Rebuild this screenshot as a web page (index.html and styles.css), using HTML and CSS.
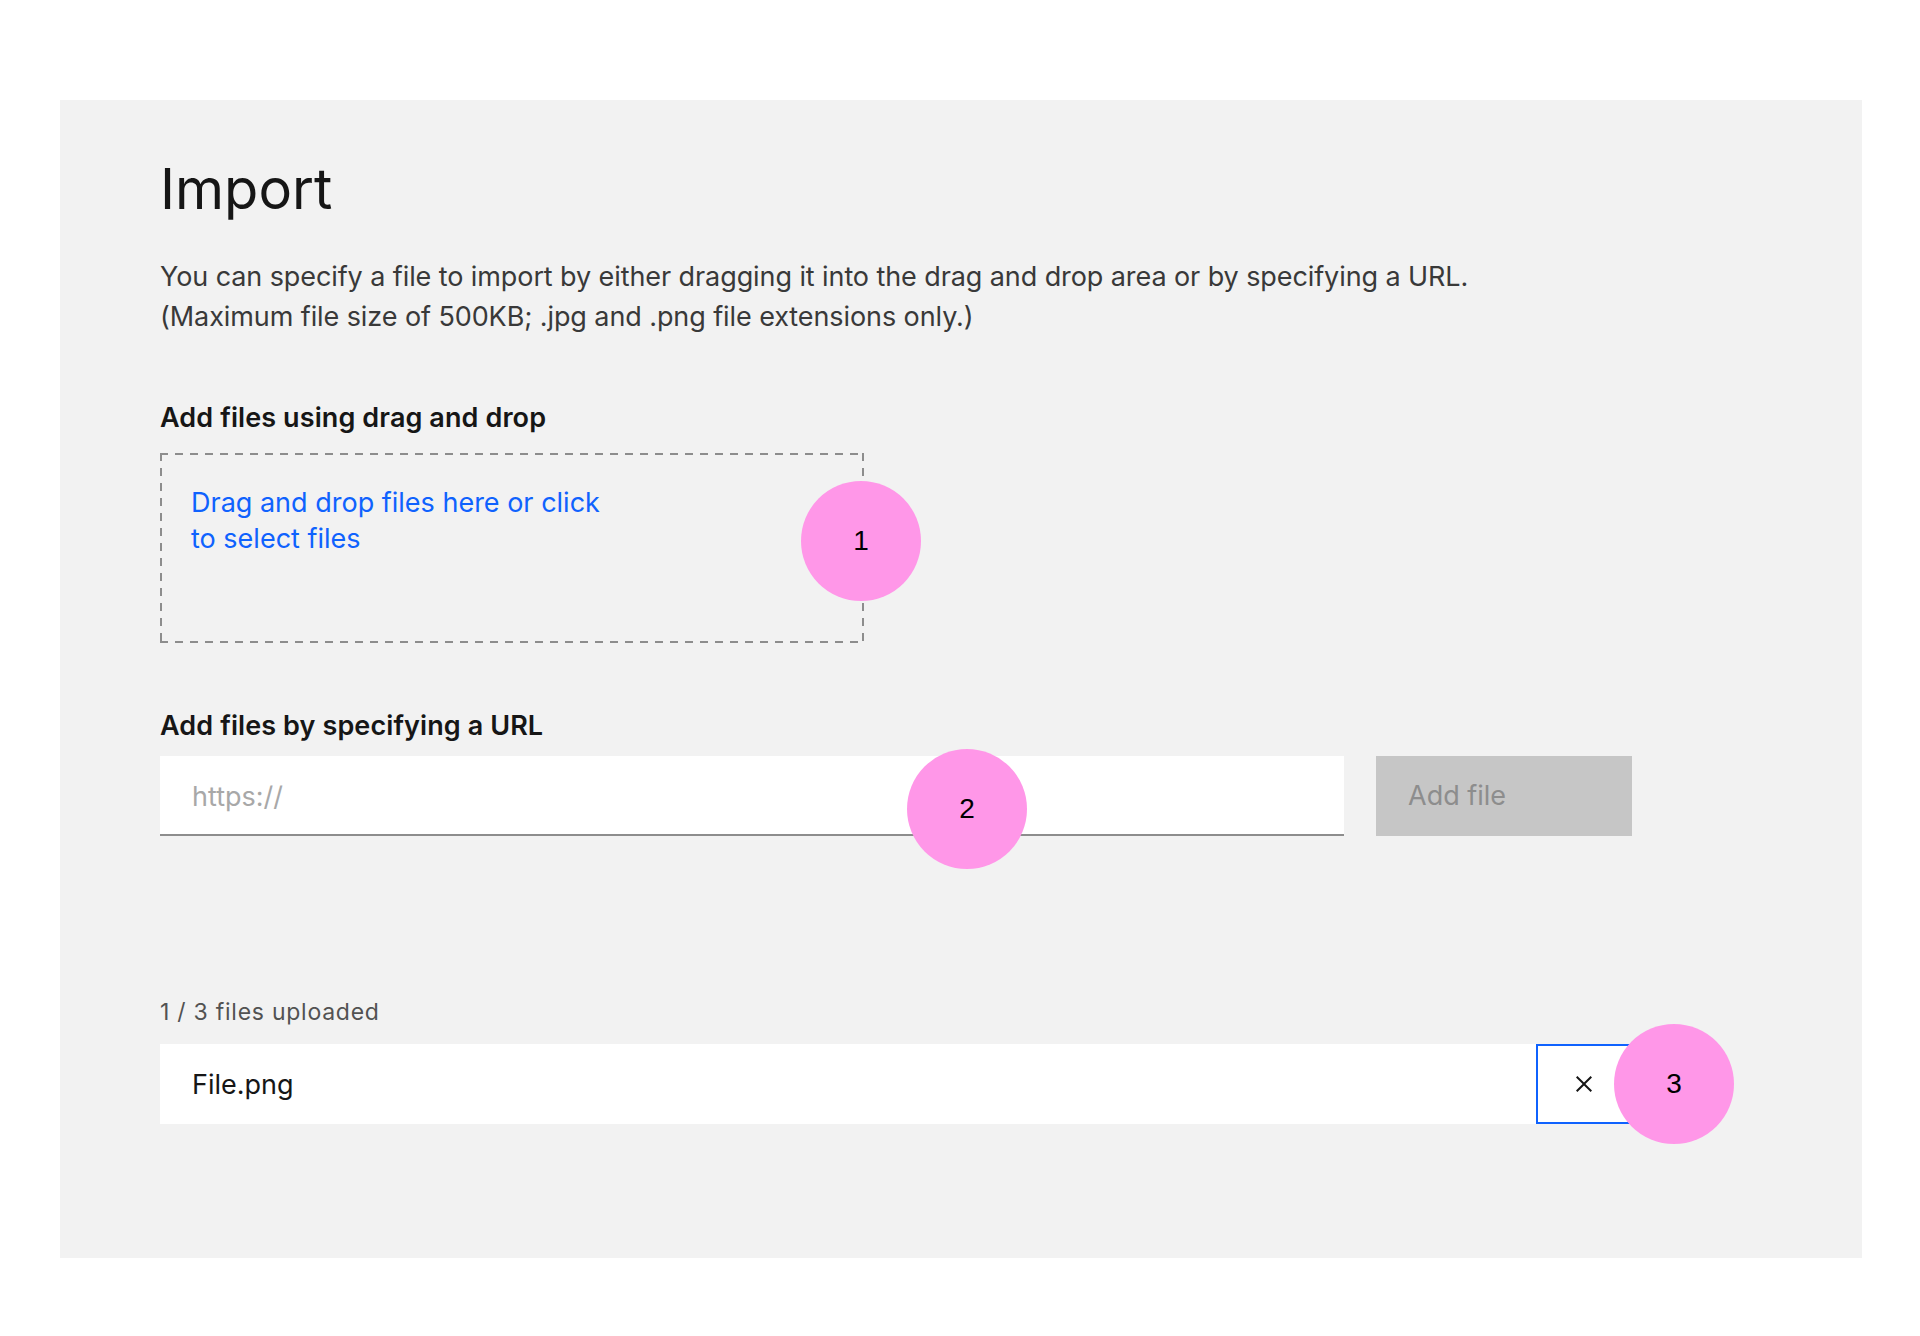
FILE: index.html
```html
<!DOCTYPE html>
<html lang="en">
<head>
<meta charset="utf-8">
<title>Import</title>
<link rel="stylesheet" href="styles.css">
</head>
<body>
<div class="page">
  <section class="panel">
    <h1 class="title">Import</h1>
    <p class="desc">You can specify a file to import by either dragging it into the drag and drop area or by specifying a URL.<br>(Maximum file size of 500KB; .jpg and .png file extensions only.)</p>

    <div class="field">
      <div class="label label-drop">Add files using drag and drop</div>
      <div class="drop">
        <span class="drop-text">Drag and drop files here or click<br>to select files</span>
        <span class="marker m1">1</span>
      </div>
    </div>

    <div class="field field-url">
      <div class="label label-url">Add files by specifying a URL</div>
      <div class="url-row">
        <div class="url-input">https://</div>
        <button class="add-btn" type="button">Add file</button>
        <span class="marker m2">2</span>
      </div>
    </div>

    <div class="uploaded">
      <div class="helper">1 / 3 files uploaded</div>
      <div class="file-row">
        <span class="file-name">File.png</span>
        <button class="close-btn" type="button" aria-label="Remove file">
          <svg class="close-icon" viewBox="0 0 16 16" width="32" height="32"><path d="M12 4.7L11.3 4 8 7.3 4.7 4 4 4.7 7.3 8 4 11.3 4.7 12 8 8.7 11.3 12 12 11.3 8.7 8z" fill="#161616"/></svg>
        </button>
        <span class="marker m3">3</span>
      </div>
    </div>
  </section>
</div>
</body>
</html>
```

FILE: styles.css
```css
* { box-sizing: border-box; }

body {
  margin: 0;
  background: #ffffff;
  font-family: Inter, "Noto Sans", sans-serif;
  color: #161616;
}

.page {
  padding: 100px 58px 78px 60px;
}

.panel {
  width: 1802px;
  background: #f2f2f2;
  padding: 57px 0 134px 100px;
}

.title {
  margin: 0 0 36px;
  font-size: 56px;
  line-height: 64px;
  font-weight: 400;
  color: #161616;
}

.desc {
  margin: 0 0 63px;
  font-size: 27px;
  line-height: 40px;
  letter-spacing: -0.09px;
  color: #393939;
}

.label {
  font-size: 27px;
  line-height: 36px;
  font-weight: 600;
  letter-spacing: 0.1px;
  color: #161616;
}

.label-drop { margin-bottom: 17px; }

.field-url { margin-top: 65px; }
.label-url { margin-bottom: 12px; }

.drop {
  position: relative;
  width: 704px;
  height: 190px;
  padding: 32px 31px;
  background-image:
    repeating-linear-gradient(90deg, #8d8d8d 0 8px, transparent 8px 15px),
    repeating-linear-gradient(90deg, #8d8d8d 0 8px, transparent 8px 15px),
    repeating-linear-gradient(180deg, #8d8d8d 0 8px, transparent 8px 15px),
    repeating-linear-gradient(180deg, #8d8d8d 0 8px, transparent 8px 15px);
  background-size: 100% 2px, 100% 2px, 2px 100%, 2px 100%;
  background-position: left top, left bottom, left top, right top;
  background-repeat: no-repeat;
}

.drop-text {
  display: block;
  font-size: 27px;
  line-height: 36px;
  color: #0f62fe;
}

.url-row {
  position: relative;
  display: flex;
  gap: 32px;
  width: 1472px;
  height: 80px;
}

.url-input {
  flex: 1;
  height: 80px;
  background: #ffffff;
  border-bottom: 2px solid #8d8d8d;
  padding: 4px 32px 0;
  font-size: 27px;
  line-height: 74px;
  color: #a8a8a8;
}

.add-btn {
  width: 256px;
  height: 80px;
  border: 0;
  margin: 0;
  background: #c6c6c6;
  padding: 0 32px;
  text-align: left;
  font-family: inherit;
  font-size: 27px;
  line-height: 80px;
  color: #8d8d8d;
}

.uploaded { margin-top: 160px; }

.helper {
  font-size: 23px;
  line-height: 32px;
  letter-spacing: 0.75px;
  color: #525252;
  margin-bottom: 16px;
}

.file-row {
  position: relative;
  display: flex;
  width: 1472px;
  height: 80px;
  background: #ffffff;
}

.file-name {
  flex: 1;
  padding: 2px 32px 0;
  font-size: 27px;
  line-height: 78px;
  color: #161616;
}

.close-btn {
  width: 96px;
  height: 80px;
  margin: 0;
  padding: 0;
  border: 2px solid #0f62fe;
  background: #ffffff;
  display: flex;
  align-items: center;
  justify-content: center;
}

.close-icon { display: block; }

.marker {
  position: absolute;
  width: 120px;
  height: 120px;
  border-radius: 50%;
  background: #ff97e8;
  transform: translate(-50%, -50%);
  display: flex;
  align-items: center;
  justify-content: center;
  font-family: "Liberation Sans", Arial, sans-serif;
  font-size: 28px;
  color: #000000;
}

.m1 { left: 701px; top: 88px; }
.m2 { left: 807px; top: 53px; }
.m3 { left: 1514px; top: 40px; }
```
